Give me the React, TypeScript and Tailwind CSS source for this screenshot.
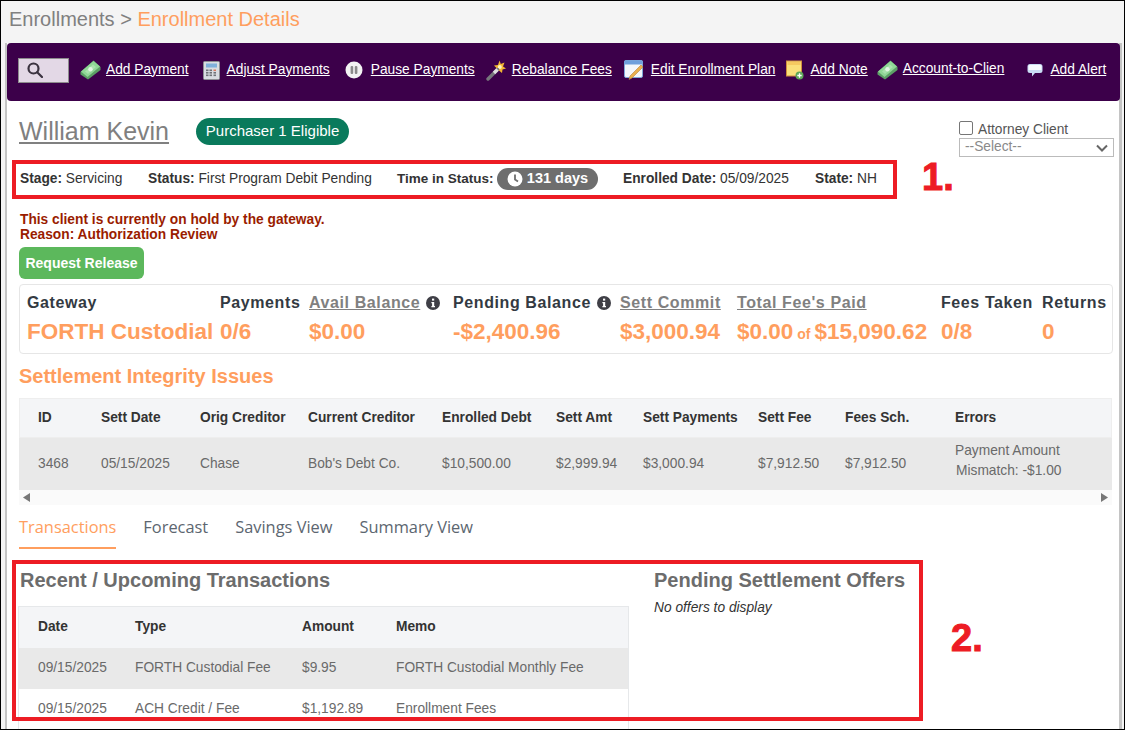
import React from "react";

const Money = () => (
  <svg width="21" height="20" viewBox="0 0 21 20" className="shrink-0">
    <path d="M0.5 12 L13.5 0.5 L20.5 7 L20.5 10 L8 19.5 L0.5 14.5 Z" fill="#5c9f66" />
    <path d="M1 11.5 L13.5 1 L20 6.5 L7.5 17 Z" fill="#8fd796" />
    <path d="M5 11.5 L13 4.5 L16 7 L8 14 Z" fill="#a9e3ad" />
    <circle cx="10.5" cy="9.2" r="2.2" fill="#e3f6e4" />
  </svg>
);
const Calc = () => (
  <svg width="17" height="19" viewBox="0 0 17 19" className="shrink-0">
    <rect x="0.5" y="0.5" width="16" height="18" rx="1" fill="#d9dde2" stroke="#8d8f94" />
    <rect x="3" y="2.5" width="11" height="4" fill="#7fb0dc" />
    {[8.5, 11, 13.5].map((y) =>
      [3, 6.5, 10.5].map((x) => <rect key={`${x}-${y}`} x={x} y={y} width="2.5" height="1.6" fill={x === 10.5 && y === 8.5 ? "#d87a60" : "#6f7378"} />)
    )}
  </svg>
);
const Pause = () => (
  <svg width="18" height="18" viewBox="0 0 18 18" className="shrink-0">
    <circle cx="9" cy="9" r="8.5" fill="#f3f3f3" />
    <rect x="5.6" y="5" width="2.6" height="8" rx="1" fill="#8b8b8b" />
    <rect x="9.8" y="5" width="2.6" height="8" rx="1" fill="#8b8b8b" />
  </svg>
);
const Wand = () => (
  <svg width="20" height="21" viewBox="0 0 20 21" className="shrink-0">
    <path d="M13.5 0.5 L14.8 4 L18.5 2.5 L17 6.5 L20 8.5 L16.5 9.5 L16 13 L13 10.5 L9.5 12 L10.5 8 L8 5.5 L12 5 Z" fill="#f2b632" />
    <circle cx="13.8" cy="7" r="2" fill="#fff4c4" />
    <path d="M11.5 9.5 L2 19" stroke="#77777c" strokeWidth="3.4" strokeLinecap="round" />
    <path d="M11.5 9.5 L8 13" stroke="#e0e0e0" strokeWidth="3.4" />
  </svg>
);
const EditPlan = () => (
  <svg width="20" height="20" viewBox="0 0 20 20" className="shrink-0">
    <rect x="0.5" y="0.5" width="18" height="17" rx="1.5" fill="#f4f7fb" stroke="#7fa7d8" />
    <rect x="0.5" y="0.5" width="18" height="4" fill="#6f9fdc" />
    <path d="M19 7 L8 18 L5 19.5 L6 16 L17 5 Z" fill="#eab04e" stroke="#b8813a" strokeWidth="0.6" />
  </svg>
);
const Note = () => (
  <svg width="18" height="20" viewBox="0 0 18 20" className="shrink-0">
    <rect x="0.5" y="1" width="15" height="15" fill="#fbe07a" stroke="#d18f3e" />
    <rect x="1.5" y="2" width="13" height="3" fill="#f6c960" />
    <circle cx="13.5" cy="15.5" r="4" fill="#5fa85a" />
    <path d="M13.5 13.3 V17.7 M11.3 15.5 H15.7" stroke="#fff" strokeWidth="1.3" />
  </svg>
);
const Bubble = () => (
  <svg width="16" height="15" viewBox="0 0 16 15" className="shrink-0">
    <path d="M3 1 H13 Q15.5 1 15.5 3.5 V7.5 Q15.5 10 13 10 H8 L5 13.5 V10 H3 Q0.5 10 0.5 7.5 V3.5 Q0.5 1 3 1 Z" fill="#c9dcf4" />
    <path d="M3 2 H13 Q14.5 2 14.5 3.5 V7 H1.5 V3.5 Q1.5 2 3 2 Z" fill="#f8fbff" />
  </svg>
);
const Info = () => (
  <svg width="14" height="14" viewBox="0 0 14 14" className="shrink-0">
    <circle cx="7" cy="7" r="7" fill="#3f3f46" />
    <rect x="6" y="2.6" width="2.2" height="2" fill="#fff" />
    <path d="M5.4 6 H8.2 V10 H9 V11.2 H5.4 V10 H6.1 V7.2 H5.4 Z" fill="#fff" />
  </svg>
);

const tools = [
  { icon: <Money />, label: "Add Payment", ml: "ml-0", gap: "ml-[5px]" },
  { icon: <Calc />, label: "Adjust Payments", ml: "ml-[14px]", gap: "ml-[7px]" },
  { icon: <Pause />, label: "Pause Payments", ml: "ml-[15px]", gap: "ml-[8px]" },
  { icon: <Wand />, label: "Rebalance Fees", ml: "ml-[11px]", gap: "ml-[6px]" },
  { icon: <EditPlan />, label: "Edit Enrollment Plan", ml: "ml-[12px]", gap: "ml-[7px]" },
  { icon: <Note />, label: "Add Note", ml: "ml-[11px]", gap: "ml-[6px]" },
  { icon: <Money />, label: "Account-to-Clien", ml: "ml-[9px]", gap: "ml-[5px] mb-[2px]" },
  { icon: <Bubble />, label: "Add Alert", ml: "ml-[23px]", gap: "ml-[7px]" },
];

const summary = [
  { w: "w-[193px]", head: "Gateway", val: "FORTH Custodial" },
  { w: "w-[89px]", head: "Payments", val: "0/6" },
  { w: "w-[144px]", head: "Avail Balance", link: true, info: true, val: "$0.00" },
  { w: "w-[167px]", head: "Pending Balance", info: true, val: "-$2,400.96" },
  { w: "w-[117px]", head: "Sett Commit", link: true, val: "$3,000.94" },
  { w: "w-[204px]", head: "Total Fee's Paid", link: true, val: "fees" },
  { w: "w-[101px]", head: "Fees Taken", val: "0/8" },
  { w: "w-[65px]", head: "Returns", val: "0" },
];

const settleCols = "grid grid-cols-[63px_99px_108px_134px_114px_87px_115px_87px_110px_1fr]";
const settleHead = ["ID", "Sett Date", "Orig Creditor", "Current Creditor", "Enrolled Debt", "Sett Amt", "Sett Payments", "Sett Fee", "Fees Sch.", "Errors"];
const settleRow = [
  { k: "id", v: "3468" },
  { k: "date", v: "05/15/2025" },
  { k: "orig", v: "Chase" },
  { k: "cur", v: "Bob's Debt Co." },
  { k: "debt", v: "$10,500.00" },
  { k: "amt", v: "$2,999.94" },
  { k: "pay", v: "$3,000.94" },
  { k: "fee", v: "$7,912.50" },
  { k: "sch", v: "$7,912.50" },
];

const txCols = "grid grid-cols-[97px_167px_94px_1fr]";
const txRows = [
  { bg: "bg-[#e9e9e9]", cells: ["09/15/2025", "FORTH Custodial Fee", "$9.95", "FORTH Custodial Monthly Fee"] },
  { bg: "bg-white", cells: ["09/15/2025", "ACH Credit / Fee", "$1,192.89", "Enrollment Fees"] },
];

export default function App() {
  return (
    <div className="relative flex h-[730px] w-[1125px] flex-col overflow-hidden border border-black bg-[#f4f4f4] font-['Liberation_Sans',Arial,sans-serif]">
      <div className="flex h-[42px] shrink-0 items-start pl-[8px] pt-[4px] text-[20px] leading-[28px]">
        <span className="text-[#808080]">Enrollments &gt;&nbsp;</span>
        <span className="text-[#ff9e5e]">Enrollment Details</span>
      </div>

      <div className="ml-[4px] mr-[2px] flex min-h-0 flex-1 flex-col border-l-2 border-r-[3px] border-[#c4c4c4] bg-white">
        <div className="z-10 -mr-[1px] flex h-[58px] shrink-0 items-center rounded-[4px] bg-[#3c004a] pb-[4px] pl-[11px] text-[13.75px] text-white">
          <div className="mr-[11px] flex h-[25px] w-[51px] items-center border border-[#8d8d8d] bg-[#e3d8e6] pl-[8px]">
            <svg width="16" height="16" viewBox="0 0 16 16" fill="none" stroke="#3b3340" strokeWidth="2.2">
              <circle cx="6.5" cy="6.5" r="5" />
              <path d="M10.2 10.2 L15 15" strokeLinecap="round" />
            </svg>
          </div>
          {tools.map((t) => (
            <div key={t.label} className={`flex items-center ${t.ml}`}>
              {t.icon}
              <a className={`${t.gap} whitespace-nowrap underline`}>{t.label}</a>
            </div>
          ))}
        </div>

        <div className="flex h-[59px] shrink-0 items-start justify-between pl-[12px] pr-[5px]">
          <div className="flex items-center pt-[16px]">
            <a className="text-[25px] leading-[29px] text-[#808080] underline">William Kevin</a>
            <span className="ml-[27px] flex h-[27px] w-[153px] items-center justify-center rounded-full bg-[#0a7a5c] text-[15px] text-white">Purchaser 1 Eligible</span>
          </div>
          <div className="w-[155px] pt-[19px]">
            <label className="flex h-[18px] items-center text-[13.75px] text-[#555555]">
              <span className="mb-[3px] mr-[5px] h-[14px] w-[14px] rounded-[2px] border border-[#767676] bg-white" />
              <span className="pt-[2px]">Attorney Client</span>
            </label>
            <div className="flex h-[19px] items-center justify-between border border-[#bbbbbb] px-[5px] text-[13.75px] text-[#8a8a8a]">
              --Select--
              <svg width="12" height="8" viewBox="0 0 12 8" fill="none" stroke="#666" strokeWidth="2"><path d="M1 1.5 L6 6.5 L11 1.5" /></svg>
            </div>
          </div>
        </div>

        <div className="flex h-[38px] shrink-0 items-center pl-[13px] text-[13.75px] text-[#333333]">
          <span className="w-[128px]"><b>Stage:</b> Servicing</span>
          <span className="w-[249px]"><b>Status:</b> First Program Debit Pending</span>
          <span className="w-[96px] whitespace-nowrap text-[13.5px] font-bold">Time in Status:</span>
          <span className="ml-[4px] flex h-[22px] w-[101px] items-center justify-center gap-[4px] rounded-full bg-[#6e6e6e] text-[14.5px] font-bold text-white">
            <svg width="16" height="16" viewBox="0 0 16 16"><circle cx="8" cy="8" r="7.5" fill="#fff" /><path d="M8 3.5 V8.5 L11 10.5" fill="none" stroke="#6e6e6e" strokeWidth="1.8" /></svg>
            131 days
          </span>
          <span className="ml-[25px] w-[192px]"><b>Enrolled Date:</b> 05/09/2025</span>
          <span><b>State:</b> NH</span>
        </div>

        <div className="mt-[14px] shrink-0 pl-[13px] text-[13.75px] font-bold leading-[15px] text-[#9a1c00]">
          <p>This client is currently on hold by the gateway.</p>
          <p>Reason: Authorization Review</p>
        </div>
        <button className="ml-[12px] mt-[5px] h-[32px] w-[125px] shrink-0 rounded-[6px] bg-[#5cb85c] text-[14px] font-bold text-white">Request Release</button>

        <div className="ml-[12px] mr-[6px] mt-[5px] flex h-[70px] shrink-0 rounded-[4px] border border-[#e6e6e6] pl-[7px]">
          {summary.map((s) => (
            <div key={s.head} className={`${s.w} shrink-0 pt-[9px]`}>
              <div className="flex h-[17px] items-center gap-[6px] whitespace-nowrap text-[16px] font-bold tracking-[0.6px] text-[#333a42]">
                <span className={s.link ? "text-[#808080] underline" : ""}>{s.head}</span>
                {s.info && <Info />}
              </div>
              <div className="mt-[7px] whitespace-nowrap text-[22.5px] font-bold leading-[28px] text-[#ff9e5e]">
                {s.val === "fees" ? (
                  <>$0.00<span className="mx-[4px] text-[14px]">of</span>$15,090.62</>
                ) : s.val}
              </div>
            </div>
          ))}
        </div>

        <h2 className="ml-[12px] mt-[10px] h-[34px] shrink-0 text-[20px] font-bold leading-[24px] text-[#ff9e5e]">Settlement Integrity Issues</h2>

        <div className="ml-[12px] mr-[7px] shrink-0">
          <div className={`${settleCols} h-[40px] items-center border border-[#eeeeee] bg-[#f4f5f7] pl-[18px] text-[13.75px] font-bold text-[#333333]`}>
            {settleHead.map((h) => <span key={h} className="whitespace-nowrap">{h}</span>)}
          </div>
          <div className={`${settleCols} h-[52px] items-center bg-[#e9e9e9] pl-[19px] text-[13.75px] text-[#6a6a6a]`}>
            {settleRow.map((c) => <span key={c.k} className="whitespace-nowrap">{c.v}</span>)}
            <span className="mb-[6px] whitespace-nowrap leading-[20px]">Payment Amount<br /><span className="ml-[1px]">Mismatch: -$1.00</span></span>
          </div>
          <div className="flex h-[15px] items-center justify-between bg-[#fafafa] px-[4px]">
            <svg width="8" height="9" viewBox="0 0 8 9"><path d="M7 0 V9 L0 4.5 Z" fill="#777" /></svg>
            <svg width="8" height="9" viewBox="0 0 8 9"><path d="M1 0 V9 L8 4.5 Z" fill="#777" /></svg>
          </div>
        </div>

        <div className="ml-[12px] mt-[11px] flex h-[33px] shrink-0 gap-[27px] font-['Open_Sans',sans-serif] text-[16.4px] font-medium leading-[22px] text-[#5c6670]">
          <a className="h-[33px] border-b-2 border-[#ff9e5e] text-[#ff9e5e]">Transactions</a>
          <a>Forecast</a>
          <a>Savings View</a>
          <a>Summary View</a>
        </div>

        <div className="mt-[19px] flex min-h-0 flex-1 overflow-hidden pl-[11px]">
          <div className="w-[636px] shrink-0">
            <h3 className="mb-[13px] ml-[2px] h-[25px] text-[20px] font-bold leading-[24px] text-[#6c6c6c]">Recent / Upcoming Transactions</h3>
            <div className="w-[611px] border-x border-t border-[#e6e8ea] text-[13.75px]">
              <div className={`${txCols} h-[41px] items-center bg-[#f4f5f7] pl-[19px] font-bold text-[#333333]`}>
                {["Date", "Type", "Amount", "Memo"].map((h) => <span key={h}>{h}</span>)}
              </div>
              {txRows.map((r) => (
                <div key={r.cells[1]} className={`${txCols} h-[41px] items-center ${r.bg} pl-[19px] text-[#6a6a6a]`}>
                  {r.cells.map((c) => <span key={c} className="whitespace-nowrap">{c}</span>)}
                </div>
              ))}
            </div>
          </div>
          <div>
            <h3 className="h-[25px] text-[20px] font-bold leading-[24px] text-[#6c6c6c]">Pending Settlement Offers</h3>
            <p className="mt-[7px] text-[13.75px] italic leading-[16px] text-[#333333]">No offers to display</p>
          </div>
        </div>
      </div>

      <div className="absolute left-[11px] top-[159px] h-[39px] w-[885px] border-[4px] border-[#ed1c24]" />
      <div className="absolute left-[11px] top-[559px] h-[161px] w-[911px] border-[4px] border-[#ed1c24]" />
      <span className="absolute left-[921px] top-[155px] text-[38px] font-bold leading-[42px] text-[#ed1c24] [-webkit-text-stroke:1px_#ed1c24]">1.</span>
      <span className="absolute left-[950px] top-[616px] text-[38px] font-bold leading-[42px] text-[#ed1c24] [-webkit-text-stroke:1px_#ed1c24]">2.</span>
    </div>
  );
}
